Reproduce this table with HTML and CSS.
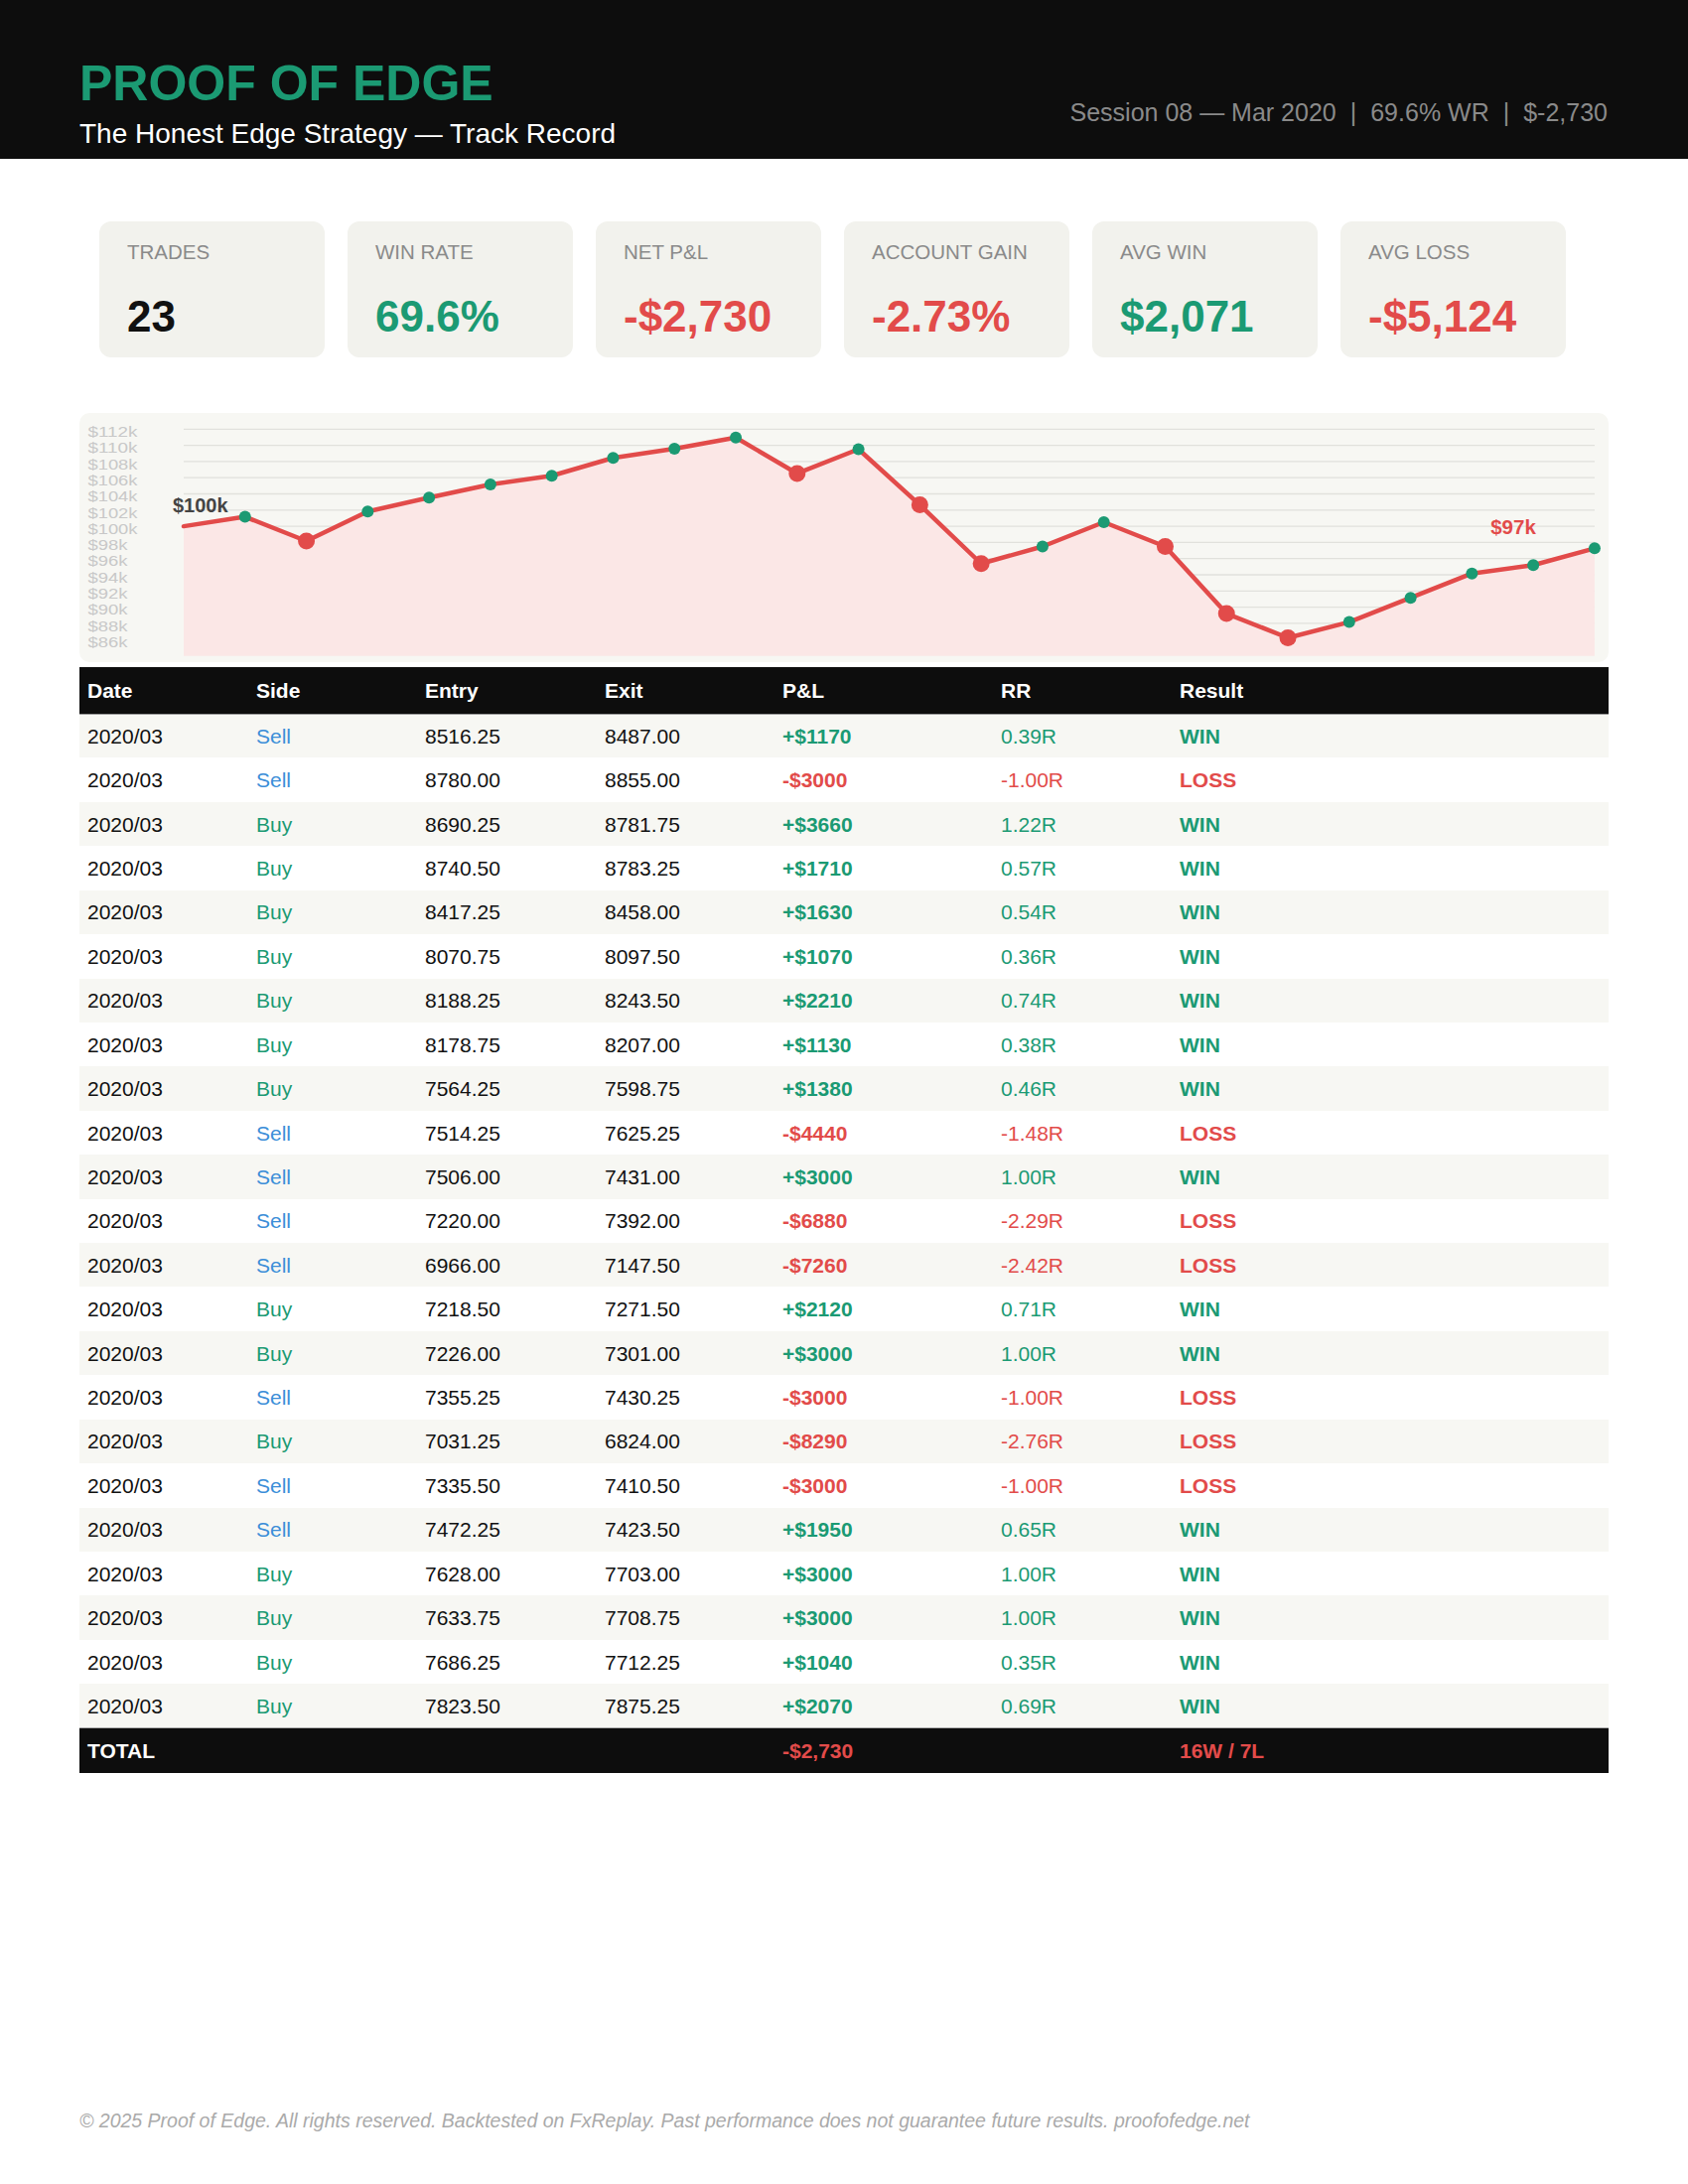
FILE: index.html
```html
<!DOCTYPE html>
<html lang="en">
<head>
<meta charset="utf-8">
<title>Proof of Edge — Track Record</title>
<link rel="stylesheet" href="styles.css">
</head>
<body>
<div class="page">
  <header class="top">
    <div class="brand">
      <h1 class="title">PROOF OF EDGE</h1>
      <div class="subtitle">The Honest Edge Strategy — Track Record</div>
    </div>
    <div class="meta">Session 08 — Mar 2020<span class="sep">|</span>69.6% WR<span class="sep">|</span>$-2,730</div>
  </header>

  <main class="content">
    <section class="cards">
      <div class="card"><div class="card-label">TRADES</div><div class="card-value">23</div></div>
      <div class="card"><div class="card-label">WIN RATE</div><div class="card-value pos">69.6%</div></div>
      <div class="card"><div class="card-label">NET P&amp;L</div><div class="card-value neg">-$2,730</div></div>
      <div class="card"><div class="card-label">ACCOUNT GAIN</div><div class="card-value neg">-2.73%</div></div>
      <div class="card"><div class="card-label">AVG WIN</div><div class="card-value pos">$2,071</div></div>
      <div class="card"><div class="card-label">AVG LOSS</div><div class="card-value neg">-$5,124</div></div>
    </section>

    <section class="chart">
      <svg class="chart-svg" width="1540" height="251" viewBox="0 0 1540 251">
        <g class="grid">
          <line x1="105" x2="1526" y1="16.3" y2="16.3"/>
          <line x1="105" x2="1526" y1="32.6" y2="32.6"/>
          <line x1="105" x2="1526" y1="48.9" y2="48.9"/>
          <line x1="105" x2="1526" y1="65.2" y2="65.2"/>
          <line x1="105" x2="1526" y1="81.5" y2="81.5"/>
          <line x1="105" x2="1526" y1="97.8" y2="97.8"/>
          <line x1="105" x2="1526" y1="114.1" y2="114.1"/>
          <line x1="105" x2="1526" y1="130.4" y2="130.4"/>
          <line x1="105" x2="1526" y1="146.7" y2="146.7"/>
          <line x1="105" x2="1526" y1="163" y2="163"/>
          <line x1="105" x2="1526" y1="179.3" y2="179.3"/>
          <line x1="105" x2="1526" y1="195.6" y2="195.6"/>
          <line x1="105" x2="1526" y1="211.9" y2="211.9"/>
          <line x1="105" x2="1526" y1="228.2" y2="228.2"/>
        </g>
        <g class="ylabels">
          <text x="8.5" y="24" textLength="50" lengthAdjust="spacingAndGlyphs">$112k</text>
          <text x="8.5" y="40.3" textLength="50" lengthAdjust="spacingAndGlyphs">$110k</text>
          <text x="8.5" y="56.6" textLength="50" lengthAdjust="spacingAndGlyphs">$108k</text>
          <text x="8.5" y="72.9" textLength="50" lengthAdjust="spacingAndGlyphs">$106k</text>
          <text x="8.5" y="89.2" textLength="50" lengthAdjust="spacingAndGlyphs">$104k</text>
          <text x="8.5" y="105.5" textLength="50" lengthAdjust="spacingAndGlyphs">$102k</text>
          <text x="8.5" y="121.8" textLength="50" lengthAdjust="spacingAndGlyphs">$100k</text>
          <text x="8.5" y="138.1" textLength="40" lengthAdjust="spacingAndGlyphs">$98k</text>
          <text x="8.5" y="154.4" textLength="40" lengthAdjust="spacingAndGlyphs">$96k</text>
          <text x="8.5" y="170.7" textLength="40" lengthAdjust="spacingAndGlyphs">$94k</text>
          <text x="8.5" y="187" textLength="40" lengthAdjust="spacingAndGlyphs">$92k</text>
          <text x="8.5" y="203.3" textLength="40" lengthAdjust="spacingAndGlyphs">$90k</text>
          <text x="8.5" y="219.6" textLength="40" lengthAdjust="spacingAndGlyphs">$88k</text>
          <text x="8.5" y="235.9" textLength="40" lengthAdjust="spacingAndGlyphs">$86k</text>
        </g>
        <polygon class="area" points="105,114.1 166.78,104.56 228.56,129.01 290.34,99.19 352.12,85.25 413.9,71.96 475.68,63.24 537.46,45.23 599.24,36.02 661.02,24.78 722.8,60.96 784.58,36.51 846.36,92.58 908.14,151.75 969.92,134.48 1031.7,110.03 1093.48,134.48 1155.26,202.04 1217.04,226.49 1278.82,210.6 1340.6,186.15 1402.38,161.7 1464.16,153.22 1525.94,136.35 1525.94,244.7 105,244.7"/>
        <polyline class="eq-line" points="105,114.1 166.78,104.56 228.56,129.01 290.34,99.19 352.12,85.25 413.9,71.96 475.68,63.24 537.46,45.23 599.24,36.02 661.02,24.78 722.8,60.96 784.58,36.51 846.36,92.58 908.14,151.75 969.92,134.48 1031.7,110.03 1093.48,134.48 1155.26,202.04 1217.04,226.49 1278.82,210.6 1340.6,186.15 1402.38,161.7 1464.16,153.22 1525.94,136.35"/>
        <g class="dot-win">
          <circle cx="166.78" cy="104.56" r="6"/>
          <circle cx="290.34" cy="99.19" r="6"/>
          <circle cx="352.12" cy="85.25" r="6"/>
          <circle cx="413.9" cy="71.96" r="6"/>
          <circle cx="475.68" cy="63.24" r="6"/>
          <circle cx="537.46" cy="45.23" r="6"/>
          <circle cx="599.24" cy="36.02" r="6"/>
          <circle cx="661.02" cy="24.78" r="6"/>
          <circle cx="784.58" cy="36.51" r="6"/>
          <circle cx="969.92" cy="134.48" r="6"/>
          <circle cx="1031.7" cy="110.03" r="6"/>
          <circle cx="1278.82" cy="210.6" r="6"/>
          <circle cx="1340.6" cy="186.15" r="6"/>
          <circle cx="1402.38" cy="161.7" r="6"/>
          <circle cx="1464.16" cy="153.22" r="6"/>
          <circle cx="1525.94" cy="136.35" r="6"/>
        </g>
        <g class="dot-loss">
          <circle cx="228.56" cy="129.01" r="8.5"/>
          <circle cx="722.8" cy="60.96" r="8.5"/>
          <circle cx="846.36" cy="92.58" r="8.5"/>
          <circle cx="908.14" cy="151.75" r="8.5"/>
          <circle cx="1093.48" cy="134.48" r="8.5"/>
          <circle cx="1155.26" cy="202.04" r="8.5"/>
          <circle cx="1217.04" cy="226.49" r="8.5"/>
        </g>
        <text class="start-label" x="94" y="100">$100k</text>
        <text class="end-label" x="1444" y="122" text-anchor="middle">$97k</text>
      </svg>
    </section>

    <table class="trades">
      <thead>
        <tr><th class="c-date">Date</th><th class="c-side">Side</th><th class="c-entry">Entry</th><th class="c-exit">Exit</th><th class="c-pnl">P&amp;L</th><th class="c-rr">RR</th><th class="c-res">Result</th></tr>
      </thead>
      <tbody>
        <tr><td>2020/03</td><td class="sell">Sell</td><td>8516.25</td><td>8487.00</td><td class="pnl pos">+$1170</td><td class="pos">0.39R</td><td class="res pos">WIN</td></tr>
        <tr><td>2020/03</td><td class="sell">Sell</td><td>8780.00</td><td>8855.00</td><td class="pnl neg">-$3000</td><td class="neg">-1.00R</td><td class="res neg">LOSS</td></tr>
        <tr><td>2020/03</td><td class="buy">Buy</td><td>8690.25</td><td>8781.75</td><td class="pnl pos">+$3660</td><td class="pos">1.22R</td><td class="res pos">WIN</td></tr>
        <tr><td>2020/03</td><td class="buy">Buy</td><td>8740.50</td><td>8783.25</td><td class="pnl pos">+$1710</td><td class="pos">0.57R</td><td class="res pos">WIN</td></tr>
        <tr><td>2020/03</td><td class="buy">Buy</td><td>8417.25</td><td>8458.00</td><td class="pnl pos">+$1630</td><td class="pos">0.54R</td><td class="res pos">WIN</td></tr>
        <tr><td>2020/03</td><td class="buy">Buy</td><td>8070.75</td><td>8097.50</td><td class="pnl pos">+$1070</td><td class="pos">0.36R</td><td class="res pos">WIN</td></tr>
        <tr><td>2020/03</td><td class="buy">Buy</td><td>8188.25</td><td>8243.50</td><td class="pnl pos">+$2210</td><td class="pos">0.74R</td><td class="res pos">WIN</td></tr>
        <tr><td>2020/03</td><td class="buy">Buy</td><td>8178.75</td><td>8207.00</td><td class="pnl pos">+$1130</td><td class="pos">0.38R</td><td class="res pos">WIN</td></tr>
        <tr><td>2020/03</td><td class="buy">Buy</td><td>7564.25</td><td>7598.75</td><td class="pnl pos">+$1380</td><td class="pos">0.46R</td><td class="res pos">WIN</td></tr>
        <tr><td>2020/03</td><td class="sell">Sell</td><td>7514.25</td><td>7625.25</td><td class="pnl neg">-$4440</td><td class="neg">-1.48R</td><td class="res neg">LOSS</td></tr>
        <tr><td>2020/03</td><td class="sell">Sell</td><td>7506.00</td><td>7431.00</td><td class="pnl pos">+$3000</td><td class="pos">1.00R</td><td class="res pos">WIN</td></tr>
        <tr><td>2020/03</td><td class="sell">Sell</td><td>7220.00</td><td>7392.00</td><td class="pnl neg">-$6880</td><td class="neg">-2.29R</td><td class="res neg">LOSS</td></tr>
        <tr><td>2020/03</td><td class="sell">Sell</td><td>6966.00</td><td>7147.50</td><td class="pnl neg">-$7260</td><td class="neg">-2.42R</td><td class="res neg">LOSS</td></tr>
        <tr><td>2020/03</td><td class="buy">Buy</td><td>7218.50</td><td>7271.50</td><td class="pnl pos">+$2120</td><td class="pos">0.71R</td><td class="res pos">WIN</td></tr>
        <tr><td>2020/03</td><td class="buy">Buy</td><td>7226.00</td><td>7301.00</td><td class="pnl pos">+$3000</td><td class="pos">1.00R</td><td class="res pos">WIN</td></tr>
        <tr><td>2020/03</td><td class="sell">Sell</td><td>7355.25</td><td>7430.25</td><td class="pnl neg">-$3000</td><td class="neg">-1.00R</td><td class="res neg">LOSS</td></tr>
        <tr><td>2020/03</td><td class="buy">Buy</td><td>7031.25</td><td>6824.00</td><td class="pnl neg">-$8290</td><td class="neg">-2.76R</td><td class="res neg">LOSS</td></tr>
        <tr><td>2020/03</td><td class="sell">Sell</td><td>7335.50</td><td>7410.50</td><td class="pnl neg">-$3000</td><td class="neg">-1.00R</td><td class="res neg">LOSS</td></tr>
        <tr><td>2020/03</td><td class="sell">Sell</td><td>7472.25</td><td>7423.50</td><td class="pnl pos">+$1950</td><td class="pos">0.65R</td><td class="res pos">WIN</td></tr>
        <tr><td>2020/03</td><td class="buy">Buy</td><td>7628.00</td><td>7703.00</td><td class="pnl pos">+$3000</td><td class="pos">1.00R</td><td class="res pos">WIN</td></tr>
        <tr><td>2020/03</td><td class="buy">Buy</td><td>7633.75</td><td>7708.75</td><td class="pnl pos">+$3000</td><td class="pos">1.00R</td><td class="res pos">WIN</td></tr>
        <tr><td>2020/03</td><td class="buy">Buy</td><td>7686.25</td><td>7712.25</td><td class="pnl pos">+$1040</td><td class="pos">0.35R</td><td class="res pos">WIN</td></tr>
        <tr><td>2020/03</td><td class="buy">Buy</td><td>7823.50</td><td>7875.25</td><td class="pnl pos">+$2070</td><td class="pos">0.69R</td><td class="res pos">WIN</td></tr>
      </tbody>
      <tfoot>
        <tr><td class="total-label">TOTAL</td><td></td><td></td><td></td><td class="neg">-$2,730</td><td></td><td class="res neg">16W / 7L</td></tr>
      </tfoot>
    </table>
  </main>

  <footer class="foot">© 2025 Proof of Edge. All rights reserved. Backtested on FxReplay. Past performance does not guarantee future results. proofofedge.net</footer>
</div>
</body>
</html>
```

FILE: styles.css
```css
* { box-sizing: border-box; }

html, body {
  margin: 0;
  padding: 0;
  background: #ffffff;
}

body {
  font-family: "Liberation Sans", Arial, Helvetica, sans-serif;
  color: #111111;
}

.page {
  min-height: 2200px;
  display: flex;
  flex-direction: column;
}

/* Header */
.top {
  background: #0d0d0d;
  height: 160px;
  padding: 56px 81px 8px 80px;
  display: flex;
  justify-content: space-between;
  align-items: flex-end;
}

.title {
  margin: 0;
  font-size: 50px;
  line-height: 56px;
  font-weight: 700;
  color: #1b9a73;
}

.subtitle {
  margin-top: 6px;
  font-size: 28px;
  line-height: 34px;
  color: #ffffff;
}

.meta {
  font-size: 25px;
  line-height: 30px;
  color: #8a8a8a;
  margin-bottom: 24px;
  white-space: nowrap;
}

.sep {
  margin: 0 14px;
}

/* Content */
.content {
  padding: 0 80px;
}

.cards {
  display: flex;
  gap: 23px;
  padding: 63px 0 0 20px;
}

.card {
  width: 227px;
  height: 137px;
  background: #f2f2ed;
  border-radius: 12px;
  padding: 19px 28px 0 28px;
}

.card-label {
  font-size: 20.5px;
  line-height: 24px;
  color: #8a8a8a;
}

.card-value {
  margin-top: 28px;
  font-size: 44px;
  line-height: 50px;
  font-weight: 700;
  color: #111111;
}

.pos { color: #1b9a73; }
.neg { color: #e24b4a; }

/* Chart */
.chart {
  margin-top: 56px;
  background: #f7f7f3;
  border-radius: 10px;
  height: 251px;
  overflow: hidden;
}

.chart-svg {
  display: block;
}

.grid line {
  stroke: #e1e1dc;
  stroke-width: 1.3;
}

.ylabels text {
  font-family: "Liberation Sans", Arial, sans-serif;
  font-size: 15.5px;
  fill: #c8c8c8;
}

.area {
  fill: #fbe7e6;
}

.eq-line {
  fill: none;
  stroke: #e24b4a;
  stroke-width: 4.5;
  stroke-linejoin: round;
  stroke-linecap: round;
}

.dot-win circle { fill: #1b9a73; }
.dot-loss circle { fill: #e24b4a; }

.start-label {
  font-family: "Liberation Sans", Arial, sans-serif;
  font-size: 20px;
  font-weight: 700;
  fill: #444444;
}

.end-label {
  font-family: "Liberation Sans", Arial, sans-serif;
  font-size: 20.5px;
  font-weight: 700;
  fill: #e24b4a;
}

/* Table */
.trades {
  margin-top: 5px;
  width: 100%;
  border-collapse: collapse;
  table-layout: fixed;
  font-size: 21px;
}

.trades th,
.trades td {
  text-align: left;
  padding: 1px 0 0 8px;
  white-space: nowrap;
}

.trades thead tr {
  background: #0d0d0d;
  height: 47px;
}

.trades th {
  color: #ffffff;
  font-weight: 700;
  border-bottom: 1px solid #9a9a9a;
}

.c-date { width: 170px; }
.c-side { width: 170px; }
.c-entry { width: 181px; }
.c-exit { width: 179px; }
.c-pnl { width: 220px; }
.c-rr { width: 180px; }

.trades tbody tr {
  height: 44.43px;
}

.trades tbody tr:nth-child(odd) {
  background: #f7f7f3;
}

.trades tbody td {
  color: #111111;
}

.trades tbody td.sell { color: #3b8ed8; }
.trades tbody td.buy { color: #1b9a73; }
.trades tbody td.pos { color: #1b9a73; }
.trades tbody td.neg { color: #e24b4a; }

.pnl, .res { font-weight: 700; }

.trades tfoot tr {
  background: #0d0d0d;
  height: 45px;
}

.trades tfoot td {
  color: #ffffff;
  border-top: 1px solid #b0b0b0;
  font-weight: 700;
}

.trades tfoot td.neg { color: #e24b4a; }

/* Footer */
.foot {
  margin-top: auto;
  padding: 0 80px 52px 80px;
  font-size: 19.5px;
  line-height: 24px;
  font-style: italic;
  color: #aaaaaa;
}
```
